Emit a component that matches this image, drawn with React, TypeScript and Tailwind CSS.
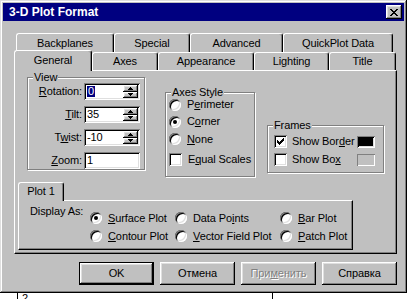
import React from "react";

const raised =
  "shadow-[inset_-1px_-1px_#000,inset_1px_1px_#fff,inset_-2px_-2px_#808080,inset_2px_2px_#dfdfdf]";
const sunken =
  "shadow-[inset_1px_1px_#808080,inset_-1px_-1px_#fff,inset_2px_2px_#000,inset_-2px_-2px_#dfdfdf]";

function U({ children }: { children: React.ReactNode }) {
  return <span className="underline underline-offset-[1px]">{children}</span>;
}

function Radio({ checked }: { checked?: boolean }) {
  return (
    <span
      className={`flex h-[12px] w-[12px] shrink-0 items-center justify-center rounded-full bg-white ${sunken}`}
    >
      {checked ? <span className="h-[4px] w-[4px] rounded-full bg-black" /> : null}
    </span>
  );
}

function Check({ checked }: { checked?: boolean }) {
  return (
    <span className={`flex h-[13px] w-[13px] shrink-0 items-center justify-center bg-white ${sunken}`}>
      {checked ? (
        <svg width="7" height="7" viewBox="0 0 7 7" shapeRendering="crispEdges">
          <path d="M0 2h1v1h1v1h1V3h1V2h1V1h1V0h1v3H6v1H5v1H4v1H3v1H2V6H1V5H0z" fill="#000" />
        </svg>
      ) : null}
    </span>
  );
}

function Group({
  label,
  className,
  children
}: {
  label: string;
  className: string;
  children: React.ReactNode;
}) {
  return (
    <div
      className={`relative shrink-0 border border-[#808080] shadow-[inset_1px_1px_#fff,1px_1px_#fff] ${className}`}
    >
      <span className="absolute -top-[8px] left-[5px] bg-[#c0c0c0] px-[1px] leading-[14px]">{label}</span>
      {children}
    </div>
  );
}

function Tab({
  w,
  h,
  children,
  active
}: {
  w: string;
  h: string;
  children: React.ReactNode;
  active?: boolean;
}) {
  return (
    <div
      className={`flex shrink-0 items-center justify-center rounded-t-[3px] border-l border-t border-r border-white border-r-black bg-[#c0c0c0] shadow-[inset_-1px_0_#808080] ${w} ${h} ${
        active ? "relative z-10 -mb-[1px] pb-[2px]" : ""
      }`}
    >
      {children}
    </div>
  );
}

function Spin({ value, selected }: { value: string; selected?: boolean }) {
  return (
    <div className={`flex h-[17px] w-[56px] items-stretch bg-white p-[2px] ${sunken}`}>
      <div className="flex flex-1 items-center pl-[1px] leading-none">
        {selected ? <span className="bg-[#000080] px-[1px] text-white">{value}</span> : value}
      </div>
      <div className="flex w-[15px] flex-col">
        <div className={`flex flex-1 items-center justify-center bg-[#c0c0c0] ${raised}`}>
          <svg width="5" height="3" viewBox="0 0 5 3" shapeRendering="crispEdges">
            <path d="M2 0h1v1h1v1h1v1H0V2h1V1h1z" fill="#000" />
          </svg>
        </div>
        <div className={`flex flex-1 items-center justify-center bg-[#c0c0c0] ${raised}`}>
          <svg width="5" height="3" viewBox="0 0 5 3" shapeRendering="crispEdges">
            <path d="M0 0h5v1H4v1H3v1H2V2H1V1H0z" fill="#000" />
          </svg>
        </div>
      </div>
    </div>
  );
}

function Field({ value }: { value: string }) {
  return (
    <div className={`flex h-[17px] w-[56px] items-center bg-white pl-[3px] leading-none ${sunken}`}>
      {value}
    </div>
  );
}

function Btn({
  children,
  def,
  disabled
}: {
  children: React.ReactNode;
  def?: boolean;
  disabled?: boolean;
}) {
  return (
    <div
      className={`flex h-[23px] w-[75px] items-center justify-center bg-[#c0c0c0] ${
        def
          ? "shadow-[inset_0_0_0_1px_#000,inset_-2px_-2px_#000,inset_2px_2px_#fff,inset_-3px_-3px_#808080,inset_3px_3px_#dfdfdf]"
          : raised
      } ${disabled ? "text-[#808080] [text-shadow:1px_1px_0_#fff]" : ""}`}
    >
      {children}
    </div>
  );
}

export default function App() {
  return (
    <div className="h-[299px] w-[414px] overflow-hidden bg-white font-['Liberation_Sans',Arial,sans-serif] text-[11px] tracking-[-0.1px] text-black">
      <div className="flex h-[293px] w-[407px] flex-col bg-[#c0c0c0] p-[3px] shadow-[inset_-1px_-1px_#000,inset_1px_1px_#dfdfdf,inset_-2px_-2px_#808080,inset_2px_2px_#fff]">
        {/* title bar */}
        <div className="flex h-[18px] items-center justify-between bg-[#000080] pl-[6px] pr-[2px]">
          <span className="text-[12px] font-bold leading-none tracking-normal text-white">3-D Plot Format</span>
          <div className={`flex h-[14px] w-[16px] items-center justify-center bg-[#c0c0c0] ${raised}`}>
            <svg width="8" height="7" viewBox="0 0 8 7" shapeRendering="crispEdges">
              <path
                d="M0 0h2v1h1v1h2V1h1V0h2v1H7v1H6v1H5v1h1v1h1v1h1v1H6V6H5V5H3v1H2v1H0V6h1V5h1V4h1V3H2V2H1V1H0z"
                fill="#000"
              />
            </svg>
          </div>
        </div>

        {/* tabs */}
        <div className="ml-[11px] mt-[12px] flex flex-col">
          <div className="flex h-[19px] pl-[2px]">
            <Tab w="w-[98px]" h="h-[19px]">Backplanes</Tab>
            <Tab w="w-[76px]" h="h-[19px]">Special</Tab>
            <Tab w="w-[93px]" h="h-[19px]">Advanced</Tab>
            <Tab w="w-[110px]" h="h-[19px]">QuickPlot Data</Tab>
          </div>
          <div className="flex h-[18px] items-end">
            <Tab w="w-[78px]" h="h-[21px]" active>
              General
            </Tab>
            <Tab w="w-[66px]" h="h-[18px]">Axes</Tab>
            <Tab w="w-[96px]" h="h-[18px]">Appearance</Tab>
            <Tab w="w-[75px]" h="h-[18px]">Lighting</Tab>
            <Tab w="w-[67px]" h="h-[18px]">Title</Tab>
          </div>

          {/* page */}
          <div className="h-[184px] w-[383px] border border-b-black border-l-white border-r-black border-t-white shadow-[inset_-1px_-1px_#808080]">
            <div className="flex h-[111px] items-start">
              <Group label="View" className="ml-[12px] mt-[6px] h-[93px] w-[118px]">
                <div className="flex flex-col gap-[6px] pt-[5px]">
                  <div className="flex h-[17px] items-center">
                    <span className="w-[56px] pr-[2px] text-right">
                      <U>R</U>otation:
                    </span>
                    <Spin value="0" selected />
                  </div>
                  <div className="flex h-[17px] items-center">
                    <span className="w-[56px] pr-[2px] text-right">
                      <U>T</U>ilt:
                    </span>
                    <Spin value="35" />
                  </div>
                  <div className="flex h-[17px] items-center">
                    <span className="w-[56px] pr-[2px] text-right">
                      T<U>w</U>ist:
                    </span>
                    <Spin value="-10" />
                  </div>
                  <div className="flex h-[17px] items-center">
                    <span className="w-[56px] pr-[2px] text-right">
                      <U>Z</U>oom:
                    </span>
                    <Field value="1" />
                  </div>
                </div>
              </Group>

              <Group label="Axes Style" className="ml-[20px] mt-[21px] h-[85px] w-[90px]">
                <div className="flex flex-col pl-[3px] pt-[3px]">
                  <div className="flex h-[17px] items-center gap-[6px]">
                    <Radio />
                    <span>
                      P<U>e</U>rimeter
                    </span>
                  </div>
                  <div className="flex h-[17px] items-center gap-[6px]">
                    <Radio checked />
                    <span>
                      C<U>o</U>rner
                    </span>
                  </div>
                  <div className="flex h-[18px] items-center gap-[6px]">
                    <Radio />
                    <span>
                      <U>N</U>one
                    </span>
                  </div>
                  <div className="mt-[2px] flex h-[18px] items-center gap-[6px]">
                    <Check />
                    <span>
                      E<U>q</U>ual Scales
                    </span>
                  </div>
                </div>
              </Group>

              <Group label="Frames" className="ml-[12px] mt-[54px] h-[48px] w-[117px]">
                <div className="flex flex-col gap-[5px] pl-[6px] pr-[8px] pt-[9px]">
                  <div className="flex h-[13px] items-center">
                    <Check checked />
                    <span className="ml-[5px]">
                      Show Bor<U>d</U>er
                    </span>
                    <span className={`ml-auto h-[12px] w-[18px] shrink-0 bg-black ${sunken}`} />
                  </div>
                  <div className="flex h-[13px] items-center">
                    <Check />
                    <span className="ml-[5px]">
                      Show Bo<U>x</U>
                    </span>
                    <span className="ml-auto h-[12px] w-[18px] shrink-0 bg-[#c0c0c0] shadow-[inset_1px_1px_#808080,inset_-1px_-1px_#fff]" />
                  </div>
                </div>
              </Group>
            </div>

            {/* Plot 1 sub tabs */}
            <div className="ml-[3px] flex flex-col">
              <div className="flex h-[18px] items-end">
                <Tab w="w-[46px]" h="h-[19px]" active>
                  Plot 1
                </Tab>
              </div>
              <div className="flex h-[50px] w-[335px] border border-b-black border-l-white border-r-black border-t-white shadow-[inset_-1px_-1px_#808080]">
                <div className="w-[71px] pl-[11px] pt-[2px]">Display As:</div>
                <div className="grid grid-cols-[85px_105px_1fr] grid-rows-[18px_18px] pt-[8px]">
                  <div className="flex items-center gap-[6px]">
                    <Radio checked />
                    <span>
                      <U>S</U>urface Plot
                    </span>
                  </div>
                  <div className="flex items-center gap-[6px]">
                    <Radio />
                    <span>
                      Data Po<U>i</U>nts
                    </span>
                  </div>
                  <div className="flex items-center gap-[6px]">
                    <Radio />
                    <span>
                      <U>B</U>ar Plot
                    </span>
                  </div>
                  <div className="flex items-center gap-[6px]">
                    <Radio />
                    <span>
                      <U>C</U>ontour Plot
                    </span>
                  </div>
                  <div className="flex items-center gap-[6px]">
                    <Radio />
                    <span>
                      <U>V</U>ector Field Plot
                    </span>
                  </div>
                  <div className="flex items-center gap-[6px]">
                    <Radio />
                    <span>
                      <U>P</U>atch Plot
                    </span>
                  </div>
                </div>
              </div>
            </div>
          </div>
        </div>

        {/* buttons */}
        <div className="mt-[8px] flex justify-end gap-[6px] pr-[7px]">
          <Btn def>OK</Btn>
          <Btn>Отмена</Btn>
          <Btn disabled>
            При<U>м</U>енить
          </Btn>
          <Btn>Справка</Btn>
        </div>
      </div>

      {/* page behind the dialog */}
      <div className="flex h-[6px]">
        <div className="ml-[17px] w-px bg-black" />
        <div className="ml-[4px] text-[11px] leading-[10px]">2</div>
        <div className="ml-[244px] w-px bg-black" />
      </div>
    </div>
  );
}
